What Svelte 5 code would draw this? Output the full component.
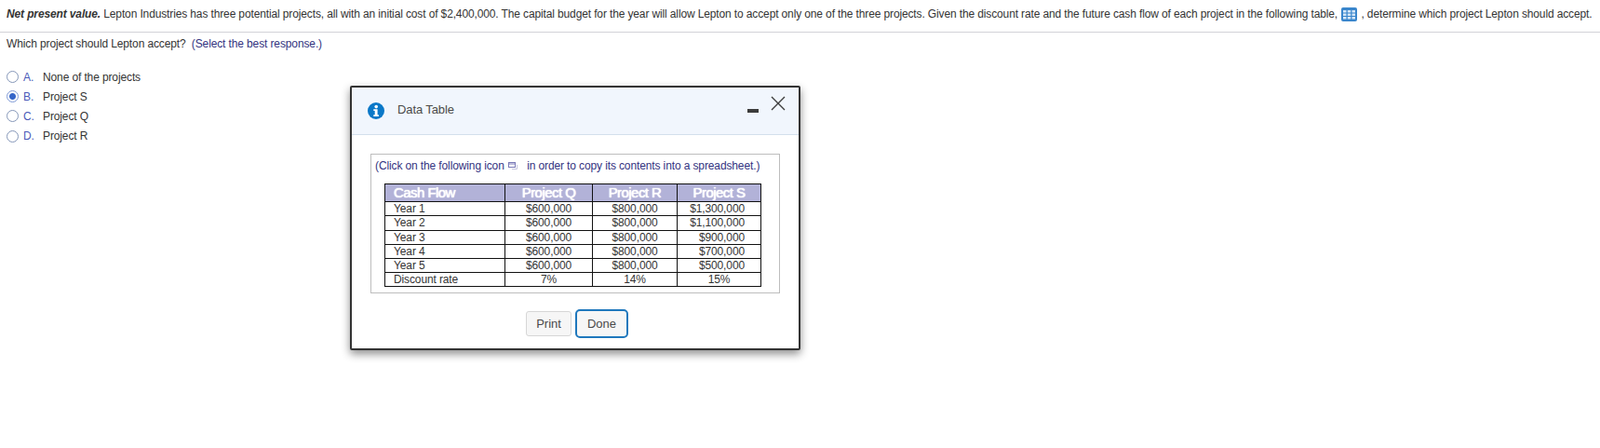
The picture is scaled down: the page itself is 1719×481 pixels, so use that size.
<script>
  const options = [
    { letter: 'A.', label: 'None of the projects', checked: false },
    { letter: 'B.', label: 'Project S', checked: true },
    { letter: 'C.', label: 'Project Q', checked: false },
    { letter: 'D.', label: 'Project R', checked: false }
  ];

  const rows = [
    ['Year 1', '$600,000', '$800,000', '$1,300,000'],
    ['Year 2', '$600,000', '$800,000', '$1,100,000'],
    ['Year 3', '$600,000', '$800,000', '$900,000'],
    ['Year 4', '$600,000', '$800,000', '$700,000'],
    ['Year 5', '$600,000', '$800,000', '$500,000']
  ];
</script>

<main class="page">
  <p class="question">
    <b><i>Net present value.</i></b> Lepton Industries has three potential projects, all with an initial cost of $2,400,000. The capital budget for the year will allow Lepton to accept only one of the three projects. Given the discount rate and the future cash flow of each project in the following table,
    <svg class="tableIcon" width="17" height="15" viewBox="0 0 17 15">
      <rect width="17" height="15" rx="2" fill="#3a86cc" />
      <g fill="#d6e7f7">
        <rect x="2" y="3" width="3.5" height="2.5" />
        <rect x="6.75" y="3" width="3.5" height="2.5" />
        <rect x="11.5" y="3" width="3.5" height="2.5" />
        <rect x="2" y="6.5" width="3.5" height="2.5" />
        <rect x="6.75" y="6.5" width="3.5" height="2.5" />
        <rect x="11.5" y="6.5" width="3.5" height="2.5" />
        <rect x="2" y="10" width="3.5" height="2.5" />
        <rect x="6.75" y="10" width="3.5" height="2.5" />
        <rect x="11.5" y="10" width="3.5" height="2.5" />
      </g>
    </svg>
    , determine which project Lepton should accept.
  </p>
  <div class="prompt">Which project should Lepton accept? <span class="hint">(Select the best response.)</span></div>

  <ul class="options">
    {#each options as option}
      <li>
        <span class="radio" class:checked={option.checked}></span>
        <span class="letter">{option.letter}</span>
        <span>{option.label}</span>
      </li>
    {/each}
  </ul>

  <section class="dialog">
    <header class="dialogHeader">
      <svg class="info" width="18" height="18" viewBox="0 0 18 18">
        <circle cx="9" cy="9" r="9" fill="#0a78c8" />
        <circle cx="9.2" cy="4.6" r="1.8" fill="#fff" />
        <path d="M6.3 7.3h4.3v6h1.3v1.7H6.3v-1.7h1.4V9H6.3z" fill="#fff" />
      </svg>
      <span class="dialogTitle">Data Table</span>
      <span class="minimize"></span>
      <svg class="close" width="16" height="16" viewBox="0 0 16 16">
        <path d="M1 1l14 14M15 1L1 15" stroke="#3c3c3c" stroke-width="1.4" fill="none" />
      </svg>
    </header>

    <div class="dialogBody">
      <div class="tableBox">
        <div class="copyNote">
          (Click on the following icon
          <svg class="copyIcon" width="11" height="9" viewBox="0 0 11 9">
            <rect x="0.5" y="0.5" width="7" height="5" fill="#fff" stroke="#7a7ab8" />
            <path d="M0.5 2h7" stroke="#7a7ab8" />
            <path d="M9.5 3v4.5H4" stroke="#c4c4de" fill="none" />
          </svg>
          in order to copy its contents into a spreadsheet.)
        </div>
        <table>
          <thead>
            <tr>
              <th class="first">Cash Flow</th>
              <th>Project Q</th>
              <th>Project R</th>
              <th>Project S</th>
            </tr>
          </thead>
          <tbody>
            {#each rows as row}
              <tr>
                <td class="first">{row[0]}</td>
                <td class="money">{row[1]}</td>
                <td class="money">{row[2]}</td>
                <td class="money wide">{row[3]}</td>
              </tr>
            {/each}
            <tr>
              <td class="first">Discount rate</td>
              <td>7%</td>
              <td>14%</td>
              <td>15%</td>
            </tr>
          </tbody>
        </table>
      </div>
      <div class="buttons">
        <button class="print">Print</button>
        <button class="done">Done</button>
      </div>
    </div>
  </section>
</main>

<style>
  :global(body) {
    margin: 0;
    background: #fff;
    font-family: "Liberation Sans", Arial, sans-serif;
    font-size: 12px;
    color: #333;
  }

  .page {
    position: relative;
    height: 481px;
    overflow: hidden;
    letter-spacing: -0.12px;
  }

  .question {
    margin: 0;
    height: 35px;
    box-sizing: border-box;
    padding: 8px 0 0 7px;
    line-height: 14px;
    white-space: nowrap;
    letter-spacing: -0.13px;
    border-bottom: 1px solid #d2d2d8;
  }

  .tableIcon {
    vertical-align: -4px;
    margin: 0 1px;
  }

  .prompt {
    padding: 5px 0 0 7px;
    line-height: 14px;
  }

  .hint {
    margin-left: 3px;
    color: #33337f;
  }

  .options {
    list-style: none;
    margin: 0;
    padding: 18px 0 0 7px;
  }

  .options li {
    display: flex;
    align-items: center;
    height: 21px;
  }

  .options li:last-child {
    height: 22px;
  }

  .radio {
    box-sizing: border-box;
    width: 13px;
    height: 13px;
    margin-right: 5px;
    border: 1px solid #8496b8;
    border-radius: 50%;
    background: #fff;
  }

  .radio.checked {
    border-color: #7f9ad6;
    background: radial-gradient(circle, #3565c8 0 3px, #fff 4px);
  }

  .letter {
    width: 21px;
    color: #4a5ab8;
  }

  .dialog {
    position: absolute;
    left: 376px;
    top: 92px;
    width: 484px;
    height: 284px;
    box-sizing: border-box;
    border: 2px solid #333;
    border-radius: 2px;
    background: #fff;
    box-shadow: 0 4px 10px rgba(0, 0, 0, 0.45);
  }

  .dialogHeader {
    display: flex;
    align-items: center;
    height: 51px;
    box-sizing: border-box;
    padding: 0 15px 3px 17px;
    background: #f1f6fd;
    border-bottom: 1px solid #d3dfec;
  }

  .info {
    margin-top: 3px;
  }

  .dialogTitle {
    margin-left: 14px;
    font-size: 13px;
    letter-spacing: -0.1px;
    color: #4a4a4a;
    flex: 1;
  }

  .minimize {
    width: 12px;
    height: 4px;
    margin: 2px 13px 0 0;
    background: #3c3c3c;
  }

  .close {
    margin: -13px -1px 0 0;
  }

  .dialogBody {
    padding: 20px 20px 0;
  }

  .tableBox {
    box-sizing: border-box;
    width: 440px;
    height: 150px;
    padding: 5px 0 0 4px;
    border: 1px solid #bdbdbd;
  }

  .copyNote {
    line-height: 14px;
    color: #33337f;
    white-space: nowrap;
  }

  .copyIcon {
    vertical-align: -1px;
    margin: 0 6px 0 1px;
  }

  table {
    border-collapse: collapse;
    table-layout: fixed;
    width: 405px;
    margin: 12px 0 0 10px;
    color: #333;
  }

  th, td {
    padding: 0;
    height: 15px;
    line-height: 13px;
    text-align: center;
    border: 1px solid #111;
    box-sizing: border-box;
  }

  tbody tr:nth-child(2) td {
    height: 16px;
  }

  th {
    height: 19px;
    padding-bottom: 2px;
    background: #b2b2d8;
    color: #fff;
    font-size: 15px;
    font-weight: 400;
    letter-spacing: -0.55px;
    text-shadow: 0 0 1px #fff, 0 0 1px #fff;
  }

  th.first, td.first {
    width: 129px;
    text-align: left;
    padding-left: 9px;
  }

  th:nth-child(2), td:nth-child(2) { width: 94px; }
  th:nth-child(3), td:nth-child(3) { width: 91px; }

  .wide {
    text-align: right;
    padding-right: 17px;
  }

  .buttons {
    display: flex;
    justify-content: center;
    align-items: center;
    gap: 4px;
    margin: 17px 0 0 4px;
  }

  button {
    box-sizing: border-box;
    height: 27px;
    padding: 0;
    font: inherit;
    font-size: 13px;
    letter-spacing: 0;
    color: #4a4a4a;
    background: #f6f6f6;
    border: 1px solid #d6d6d6;
    border-radius: 3px;
  }

  .print {
    width: 49px;
  }

  .done {
    width: 57px;
    height: 31px;
    border: 2px solid #1f78bd;
    border-radius: 5px;
  }
</style>
